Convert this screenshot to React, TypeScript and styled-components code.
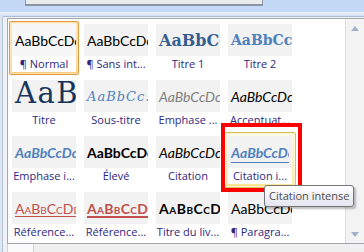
import styled, { createGlobalStyle, css } from "styled-components";

const Global = createGlobalStyle`
  html, body { margin: 0; padding: 0; }
  body {
    width: 364px;
    height: 252px;
    overflow: hidden;
    background: #dfe6ef;
    font-family: "Open Sans", "Noto Sans", sans-serif;
  }
`;

type Kind =
  | "normal"
  | "titre1"
  | "titre2"
  | "titre"
  | "soustitre"
  | "emphPale"
  | "accent"
  | "emphInt"
  | "eleve"
  | "citation"
  | "citInt"
  | "refLeg"
  | "refInt"
  | "titreLivre";

type State = "selected" | "hover" | undefined;

/* ── Chrome ─────────────────────────────────────────────── */

const Page = styled.div`
  display: flex;
  flex-direction: column;
  width: 364px;
  height: 252px;
`;

const TopBand = styled.div`
  height: 12px;
  flex: none;
  background: #c4d9f6;
`;

const RulerBox = styled.div`
  margin-left: 25px;
  width: 236px;
  height: 4px;
  background: #e9eaec;
  border: 1px solid #8b95a2;
  border-top: none;
  border-bottom-width: 2px;
`;

const Divider = styled.div`
  height: 4px;
  flex: none;
  background: linear-gradient(#eaf1fb, #d2dff1);
`;

const Frame = styled.div`
  flex: 1;
  display: flex;
  flex-direction: column;
  margin-left: 2px;
  padding: 1px 0 0 4px;
  border-top: 1px solid #aebccf;
  border-left: 1px solid #b4c1d2;
  border-top-left-radius: 2px;
  background: #eef1f5;
`;

const Panel = styled.div`
  display: flex;
  height: 224px;
  background: #fff;
  border: 1px solid #a4a7ab;
  border-right: none;
`;

const BottomBar = styled.div`
  flex: 1;
  background: #f0f0f0;
`;

const BottomTab = styled.div`
  width: 25px;
  height: 8px;
  background: #fafafa;
  border: 1px solid #cfd2d6;
  border-top: none;
`;

/* ── Gallery ────────────────────────────────────────────── */

const Gallery = styled.div`
  flex: 1;
  display: grid;
  grid-template-columns: repeat(4, 64px);
  grid-auto-rows: 48px;
  gap: 8px;
  padding: 5px 0 3px 4px;
  align-content: start;
`;

const Cell = styled.div<{ $state?: State }>`
  position: relative;
  isolation: isolate;
  display: flex;
  flex-direction: column;
  z-index: ${({ $state }) => ($state === "hover" ? 2 : "auto")};

  ${({ $state }) =>
    $state === "selected" &&
    css`
      &::before {
        content: "";
        position: absolute;
        inset: -3px;
        z-index: -1;
        border: 1px solid #e29a3c;
        border-radius: 2px;
        background: linear-gradient(#fff2dc, #fdd9a0);
        box-shadow: inset 0 0 0 1px #ffe3b5, inset 0 -4px 4px #fbc877;
      }
    `}

  ${({ $state }) =>
    $state === "hover" &&
    css`
      &::before {
        content: "";
        position: absolute;
        inset: -4px;
        z-index: -1;
        border: 1px solid #dcbd5c;
        border-radius: 2px;
        background: linear-gradient(#fffbe8, #fde9a6);
        box-shadow: inset 0 0 0 1px #fff6d2, inset 0 -3px 3px #fbe08a;
      }
    `}
`;

const Preview = styled.div<{ $state?: State }>`
  height: 32px;
  flex: none;
  display: flex;
  align-items: center;
  padding: 0 3px;
  overflow: hidden;
  background: ${({ $state }) => ($state === "selected" ? "#f7f7f7" : "#f2f2f2")};
`;

const lato = css`
  font-family: Lato, "Liberation Sans", sans-serif;
  font-size: 14px;
  color: #000;
`;

const serif = css`
  font-family: "DejaVu Serif", "Liberation Serif", serif;
`;

const kinds: Record<Kind, ReturnType<typeof css>> = {
  normal: css`${lato}`,
  titre1: css`${serif} font-size: 16px; font-weight: 700; color: #365f91;`,
  titre2: css`${serif} font-size: 14px; font-weight: 700; color: #4f81bd;`,
  titre: css`${serif} font-size: 29px; line-height: 1; letter-spacing: 1.5px; color: #17365d; margin-top: -5px;`,
  soustitre: css`${serif} font-size: 13px; font-style: italic; letter-spacing: 1px; color: #4f81bd;`,
  emphPale: css`${lato} font-style: italic; color: #808080;`,
  accent: css`${lato} font-style: italic;`,
  emphInt: css`${lato} font-style: italic; font-weight: 700; color: #4f81bd;`,
  eleve: css`${lato} font-weight: 700;`,
  citation: css`${lato} font-style: italic;`,
  citInt: css`
    ${lato}
    flex: 1;
    min-width: 0;
    overflow: hidden;
    font-style: italic;
    font-weight: 700;
    color: #4f81bd;
    border-bottom: 1px solid #4f81bd;
    padding-bottom: 1px;
    margin-top: 2px;
  `,
  refLeg: css`
    ${lato}
    font-variant: small-caps;
    color: #c0504d;
    text-decoration: underline 1px;
    text-underline-offset: 2px;
  `,
  refInt: css`
    ${lato}
    font-variant: small-caps;
    font-weight: 700;
    letter-spacing: 0.3px;
    color: #c0504d;
    text-decoration: underline 2px;
    text-underline-offset: 2px;
  `,
  titreLivre: css`
    ${lato}
    font-variant: small-caps;
    font-weight: 700;
    letter-spacing: 0.5px;
  `,
};

const Sample = styled.span<{ $kind: Kind }>`
  flex: none;
  white-space: nowrap;
  ${({ $kind }) => kinds[$kind]}
`;

const Label = styled.div`
  height: 16px;
  flex: none;
  background: #fff;
  font-size: 11px;
  line-height: 16px;
  text-align: center;
  white-space: nowrap;
  overflow: hidden;
  color: #2e2781;
`;

/* ── Overlays on the hovered cell ───────────────────────── */

const Annotation = styled.div`
  position: absolute;
  left: -7px;
  top: -13px;
  width: 81px;
  height: 69px;
  box-sizing: border-box;
  border: 4px solid #ff0000;
  pointer-events: none;
  z-index: 2;
`;

const Tooltip = styled.div`
  position: absolute;
  left: 36px;
  top: 49px;
  z-index: 3;
  height: 22px;
  box-sizing: border-box;
  padding: 0 4px;
  border: 1px solid #767676;
  border-radius: 3px;
  background: linear-gradient(#ffffff, #e4e5f0);
  box-shadow: 2px 2px 2px rgba(0, 0, 0, 0.25);
  font-size: 11px;
  line-height: 20px;
  color: #4c4c4c;
  white-space: nowrap;
`;

/* ── Scrollbar ──────────────────────────────────────────── */

const Scrollbar = styled.div`
  width: 19px;
  flex: none;
  display: flex;
  flex-direction: column;
  align-items: center;
  justify-content: space-between;
  padding: 7px 0 6px;
  box-sizing: border-box;
  background: #f3f3f3;
  border-left: 1px solid #e0e0e0;
`;

const Arrow = styled.div<{ $dir: "up" | "down" }>`
  width: 0;
  height: 0;
  border-left: 4.5px solid transparent;
  border-right: 4.5px solid transparent;
  ${({ $dir }) =>
    $dir === "up"
      ? css`border-bottom: 5px solid #a2b1ca;`
      : css`border-top: 5px solid #a2b1ca;`}
`;

/* ── Data ───────────────────────────────────────────────── */

const styles: { kind: Kind; label: string; sample?: string; state?: State }[] = [
  { kind: "normal", label: "¶ Normal", state: "selected" },
  { kind: "normal", label: "¶ Sans int..." },
  { kind: "titre1", label: "Titre 1", sample: "AaBbCc" },
  { kind: "titre2", label: "Titre 2", sample: "AaBbCc" },
  { kind: "titre", label: "Titre", sample: "AaB" },
  { kind: "soustitre", label: "Sous-titre", sample: "AaBbCc." },
  { kind: "emphPale", label: "Emphase ..." },
  { kind: "accent", label: "Accentuat..." },
  { kind: "emphInt", label: "Emphase i..." },
  { kind: "eleve", label: "Élevé" },
  { kind: "citation", label: "Citation" },
  { kind: "citInt", label: "Citation i...", state: "hover" },
  { kind: "refLeg", label: "Référence...", sample: "AaBbCcDd" },
  { kind: "refInt", label: "Référence...", sample: "AaBbCcDd" },
  { kind: "titreLivre", label: "Titre du liv...", sample: "AaBbCcDd" },
  { kind: "normal", label: "¶ Paragra..." },
];

export default function App() {
  return (
    <>
      <Global />
      <Page>
        <TopBand>
          <RulerBox />
        </TopBand>
        <Divider />
        <Frame>
          <Panel>
            <Gallery>
              {styles.map((s, i) => (
                <Cell key={i} $state={s.state}>
                  <Preview $state={s.state}>
                    <Sample $kind={s.kind}>{s.sample ?? "AaBbCcDc"}</Sample>
                  </Preview>
                  <Label>{s.label}</Label>
                  {s.state === "hover" && (
                    <>
                      <Annotation />
                      <Tooltip>Citation intense</Tooltip>
                    </>
                  )}
                </Cell>
              ))}
            </Gallery>
            <Scrollbar>
              <Arrow $dir="up" />
              <Arrow $dir="down" />
            </Scrollbar>
          </Panel>
          <BottomBar>
            <BottomTab />
          </BottomBar>
        </Frame>
      </Page>
    </>
  );
}
